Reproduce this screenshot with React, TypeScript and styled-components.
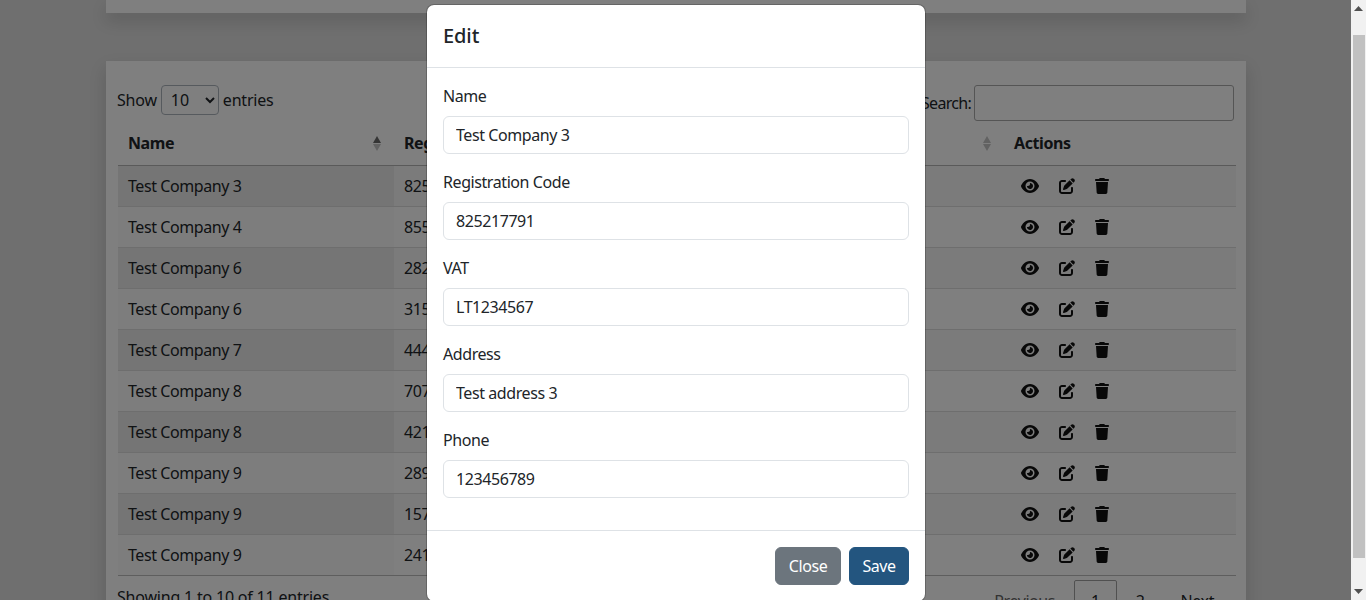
import React from "react";
import styled, { createGlobalStyle } from "styled-components";
import { FaEye, FaPenToSquare, FaTrash } from "react-icons/fa6";

const FONT = `"Noto Sans", "Open Sans", sans-serif`;

const Global = createGlobalStyle`
  html, body { margin: 0; padding: 0; height: 600px; overflow: hidden; }
  body { font-family: ${FONT}; font-size: 16px; line-height: 24px; color: #212529; background: #dedede; letter-spacing: -0.42px; }
  * { box-sizing: border-box; }
`;

const Shell = styled.div`
  display: flex;
  width: 1366px;
  height: 600px;
  overflow: hidden;
`;
const Main = styled.main`
  position: relative;
  width: 1351px;
  height: 600px;
  overflow: hidden;
  padding: 0 105px 0 106px;
  display: flex;
  flex-direction: column;
  gap: 48px;
`;
const TopCard = styled.section`
  flex: none;
  height: 13px;
  background: #fff;
  box-shadow: 0 8px 16px rgba(0, 0, 0, 0.15);
`;
const Card = styled.section`
  flex: none;
  background: #fff;
  box-shadow: 0 8px 16px rgba(0, 0, 0, 0.15);
  padding: 24px 12px 0 11px;
`;
const Controls = styled.div`
  display: flex;
  justify-content: space-between;
  align-items: flex-start;
  height: 37px;
`;
const Length = styled.label`
  display: flex;
  align-items: center;
  gap: 3px;
  height: 30px;
  letter-spacing: -0.2px;
`;
const LengthSelect = styled.select`
  width: 58px;
  height: 30px;
  margin: 0 1px;
  padding: 0 0 0 5px;
  font: inherit;
  color: #212529;
  background: #fff;
  border: 1px solid #adb5bd;
  border-radius: 4px;
`;
const SearchLabel = styled.label`
  display: flex;
  align-items: center;
  gap: 3px;
  height: 36px;
  letter-spacing: -0.7px;
`;
const SearchInput = styled.input`
  width: 260px;
  height: 36px;
  border: 1px solid #aaa;
  border-radius: 3px;
  background: #fff;
`;
const Table = styled.table`
  width: 1118px;
  margin-left: 1px;
  border-collapse: collapse;
  table-layout: fixed;
`;
const Th = styled.th<{ $w: number }>`
  position: relative;
  width: ${(p) => p.$w}px;
  padding: 9px 10px 10px;
  text-align: left;
  font-weight: 700;
  border-bottom: 1px solid #b4b4b4;
  white-space: nowrap;
`;
const SortArrows = styled.span<{ $active?: boolean }>`
  position: absolute;
  right: 13px;
  top: 14px;
  display: flex;
  flex-direction: column;
  gap: 1px;
  &::before, &::after {
    content: "";
    width: 0;
    height: 0;
    border-left: 4px solid transparent;
    border-right: 4px solid transparent;
  }
  &::before {
    border-bottom: 7px solid ${(p) => (p.$active ? "#6a6a6a" : "#c4c4c4")};
  }
  &::after {
    border-top: 7px solid #c4c4c4;
  }
`;
const Row = styled.tr<{ $odd: boolean }>`
  background: ${(p) => (p.$odd ? "rgba(0,0,0,0.03)" : "transparent")};
  border-bottom: 1px solid #dcdcdc;
  &:last-child { border-bottom-color: #bcbcbc; }
`;
const Td = styled.td<{ $tint?: string }>`
  height: 41px;
  padding: 0 10px;
  white-space: nowrap;
  overflow: hidden;
  background: ${(p) => p.$tint ?? "transparent"};
`;
const Actions = styled.div`
  display: flex;
  align-items: center;
  gap: 20px;
  padding-left: 7px;
  color: #111;
`;
const ActionIcon = styled.span<{ $w: number }>`
  display: flex;
  svg {
    width: ${(p) => p.$w}px;
    height: 16px;
  }
`;
const Foot = styled.div`
  display: flex;
  justify-content: space-between;
  align-items: flex-start;
`;
const Info = styled.div`
  padding-top: 9px;
  letter-spacing: -0.2px;
`;
const Paging = styled.div`
  display: flex;
  padding-top: 4px;
  margin-right: 3px;
  gap: 2px;
`;
const PageBtn = styled.span<{ $current?: boolean; $muted?: boolean }>`
  padding: 8px 16px;
  border: 1px solid ${(p) => (p.$current ? "#a0a0a0" : "transparent")};
  border-radius: 2px;
  color: ${(p) => (p.$muted ? "#666" : "#212529")};
`;
const Backdrop = styled.div`
  position: absolute;
  inset: 0;
  background: rgba(0, 0, 0, 0.5);
`;
const Modal = styled.div`
  position: absolute;
  left: 426px;
  top: 4px;
  width: 500px;
  height: 598px;
  background: #fff;
  border: 1px solid rgba(0, 0, 0, 0.2);
  background-clip: padding-box;
  border-radius: 8px;
  display: flex;
  flex-direction: column;
`;
const ModalHeader = styled.header`
  flex: none;
  height: 63px;
  padding: 0 16px 1px;
  display: flex;
  align-items: center;
  border-bottom: 1px solid #dee2e6;
`;
const ModalTitle = styled.h5`
  margin: 0;
  font-size: 20px;
  line-height: 30px;
  font-weight: 500;
  letter-spacing: -0.1px;
`;
const ModalBody = styled.div`
  flex: 1;
  padding: 16px 16px 0;
`;
const Field = styled.div`
  margin-bottom: 16px;
`;
const FieldLabel = styled.label`
  display: block;
  margin-bottom: 8px;
`;
const FieldInput = styled.input`
  display: block;
  width: 100%;
  height: 38px;
  padding: 6px 12px;
  font: inherit;
  letter-spacing: inherit;
  color: #212529;
  background: #fff;
  border: 1px solid #dee2e6;
  border-radius: 6px;
`;
const ModalFooter = styled.footer`
  flex: none;
  display: flex;
  justify-content: flex-end;
  gap: 8px;
  padding: 16px;
  border-top: 1px solid #dee2e6;
`;
const Button = styled.button<{ $bg: string; $w: number }>`
  width: ${(p) => p.$w}px;
  height: 38px;
  padding: 0;
  font: inherit;
  letter-spacing: inherit;
  color: #fff;
  background: ${(p) => p.$bg};
  border: 1px solid ${(p) => p.$bg};
  border-radius: 6px;
`;
const Scrollbar = styled.aside`
  width: 15px;
  height: 600px;
  flex: none;
  background: #f1f1f1;
  display: flex;
  flex-direction: column;
  align-items: center;
`;
const ArrowBox = styled.div`
  height: 17px;
  width: 15px;
  flex: none;
  display: flex;
  align-items: center;
  justify-content: center;
`;
const ScrollTrack = styled.div`
  flex: 1;
  width: 100%;
  padding: 18px 1px 25px 2px;
  display: flex;
`;
const Thumb = styled.div`
  flex: 1;
  background: #c1c1c1;
`;

const rows: [string, string][] = [
  ["Test Company 3", "825217791"],
  ["Test Company 4", "855217791"],
  ["Test Company 6", "282217791"],
  ["Test Company 6", "315217791"],
  ["Test Company 7", "444217791"],
  ["Test Company 8", "707217791"],
  ["Test Company 8", "421217791"],
  ["Test Company 9", "289217791"],
  ["Test Company 9", "157217791"],
  ["Test Company 9", "241217791"],
];
const fields = [
  ["Name", "Test Company 3"],
  ["Registration Code", "825217791"],
  ["VAT", "LT1234567"],
  ["Address", "Test address 3"],
  ["Phone", "123456789"],
];

export default function App() {
  return (
    <Shell>
      <Global />
      <Main>
        <TopCard />
        <Card>
          <Controls>
            <Length>
              Show
              <LengthSelect defaultValue="10">
                <option>10</option>
                <option>25</option>
              </LengthSelect>
              entries
            </Length>
            <SearchLabel>
              Search:
              <SearchInput />
            </SearchLabel>
          </Controls>
          <Table>
            <thead>
              <tr>
                <Th $w={276}>Name<SortArrows $active /></Th>
                <Th $w={610}>Registration Code<SortArrows /></Th>
                <Th $w={232}>Actions</Th>
              </tr>
            </thead>
            <tbody>
              {rows.map(([name, code], i) => {
                const odd = i % 2 === 0;
                return (
                  <Row key={i} $odd={odd}>
                    <Td $tint={odd ? "rgba(0,0,0,0.05)" : "rgba(0,10,30,0.015)"}>{name}</Td>
                    <Td>{code}</Td>
                    <Td>
                      <Actions>
                        <ActionIcon $w={18}><FaEye /></ActionIcon>
                        <ActionIcon $w={16}><FaPenToSquare /></ActionIcon>
                        <ActionIcon $w={14}><FaTrash /></ActionIcon>
                      </Actions>
                    </Td>
                  </Row>
                );
              })}
            </tbody>
          </Table>
          <Foot>
            <Info>Showing 1 to 10 of 11 entries</Info>
            <Paging>
              <PageBtn $muted>Previous</PageBtn>
              <PageBtn $current>1</PageBtn>
              <PageBtn>2</PageBtn>
              <PageBtn>Next</PageBtn>
            </Paging>
          </Foot>
        </Card>
        <Backdrop />
        <Modal>
          <ModalHeader><ModalTitle>Edit</ModalTitle></ModalHeader>
          <ModalBody>
            {fields.map(([label, value]) => (
              <Field key={label}>
                <FieldLabel>{label}</FieldLabel>
                <FieldInput defaultValue={value} />
              </Field>
            ))}
          </ModalBody>
          <ModalFooter>
            <Button $bg="#6c757d" $w={66}>Close</Button>
            <Button $bg="#23557f" $w={60}>Save</Button>
          </ModalFooter>
        </Modal>
      </Main>
      <Scrollbar>
        <ArrowBox>
          <svg width="9" height="5" viewBox="0 0 9 5"><path d="M4.5 0L9 5H0z" fill="#505050" /></svg>
        </ArrowBox>
        <ScrollTrack><Thumb /></ScrollTrack>
        <ArrowBox>
          <svg width="9" height="5" viewBox="0 0 9 5"><path d="M0 0h9L4.5 5z" fill="#505050" /></svg>
        </ArrowBox>
      </Scrollbar>
    </Shell>
  );
}
